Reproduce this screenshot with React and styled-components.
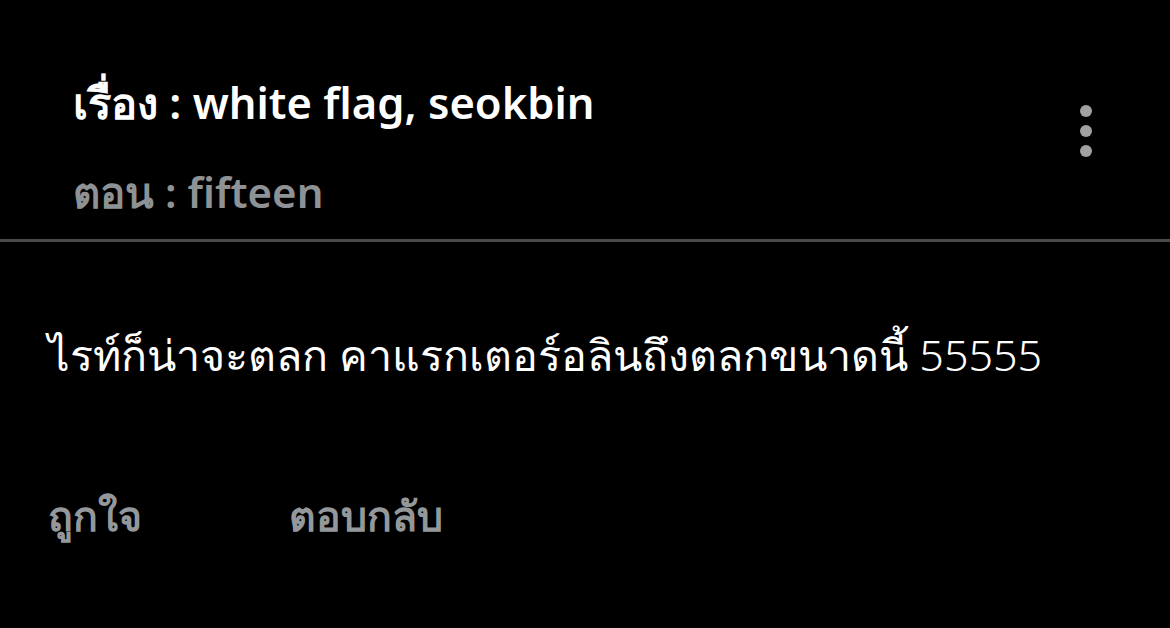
import React from 'react';
import styled, { createGlobalStyle } from 'styled-components';

const GlobalStyle = createGlobalStyle`
  html, body {
    margin: 0;
    padding: 0;
    background: #000;
  }
  body {
    font-family: "Noto Sans", "Open Sans", sans-serif;
  }
`;

const Page = styled.div`
  width: 1170px;
  height: 628px;
  background: #000;
  overflow: hidden;
`;

const Header = styled.div`
  display: flex;
  align-items: flex-start;
  justify-content: space-between;
  padding: 72px 78px 17px 73px;
  border-bottom: 3px solid #4a4a4a;
`;

const Titles = styled.div`
  display: flex;
  flex-direction: column;
  gap: 30px;
`;

const Title = styled.div`
  color: ${p => (p.muted ? '#8f9294' : '#fff')};
  font-size: ${p => (p.muted ? '42px' : '43.5px')};
  font-weight: 600;
  line-height: 60px;
`;

const MenuButton = styled.div`
  display: flex;
  flex-direction: column;
  gap: 8px;
  margin-top: 33px;
`;

const Dot = styled.span`
  width: 12px;
  height: 12px;
  border-radius: 50%;
  background: #a1a1a1;
`;

const Body = styled.div`
  padding: 83px 48px 0;
  color: #fff;
  font-size: 43px;
  font-weight: 300;
  line-height: 60px;
`;

const Actions = styled.div`
  display: flex;
  gap: 147px;
  padding: 100px 48px 0;
`;

const Action = styled.div`
  color: #94989a;
  font-size: 41px;
  font-weight: 600;
  line-height: 60px;
`;

export default function App() {
  return (
    <Page>
      <GlobalStyle />
      <Header>
        <Titles>
          <Title>เรื่อง : white flag, seokbin</Title>
          <Title muted>ตอน : fifteen</Title>
        </Titles>
        <MenuButton>
          <Dot />
          <Dot />
          <Dot />
        </MenuButton>
      </Header>
      <Body>ไรท์ก็น่าจะตลก คาแรกเตอร์อลินถึงตลกขนาดนี้ 55555</Body>
      <Actions>
        <Action>ถูกใจ</Action>
        <Action>ตอบกลับ</Action>
      </Actions>
    </Page>
  );
}
